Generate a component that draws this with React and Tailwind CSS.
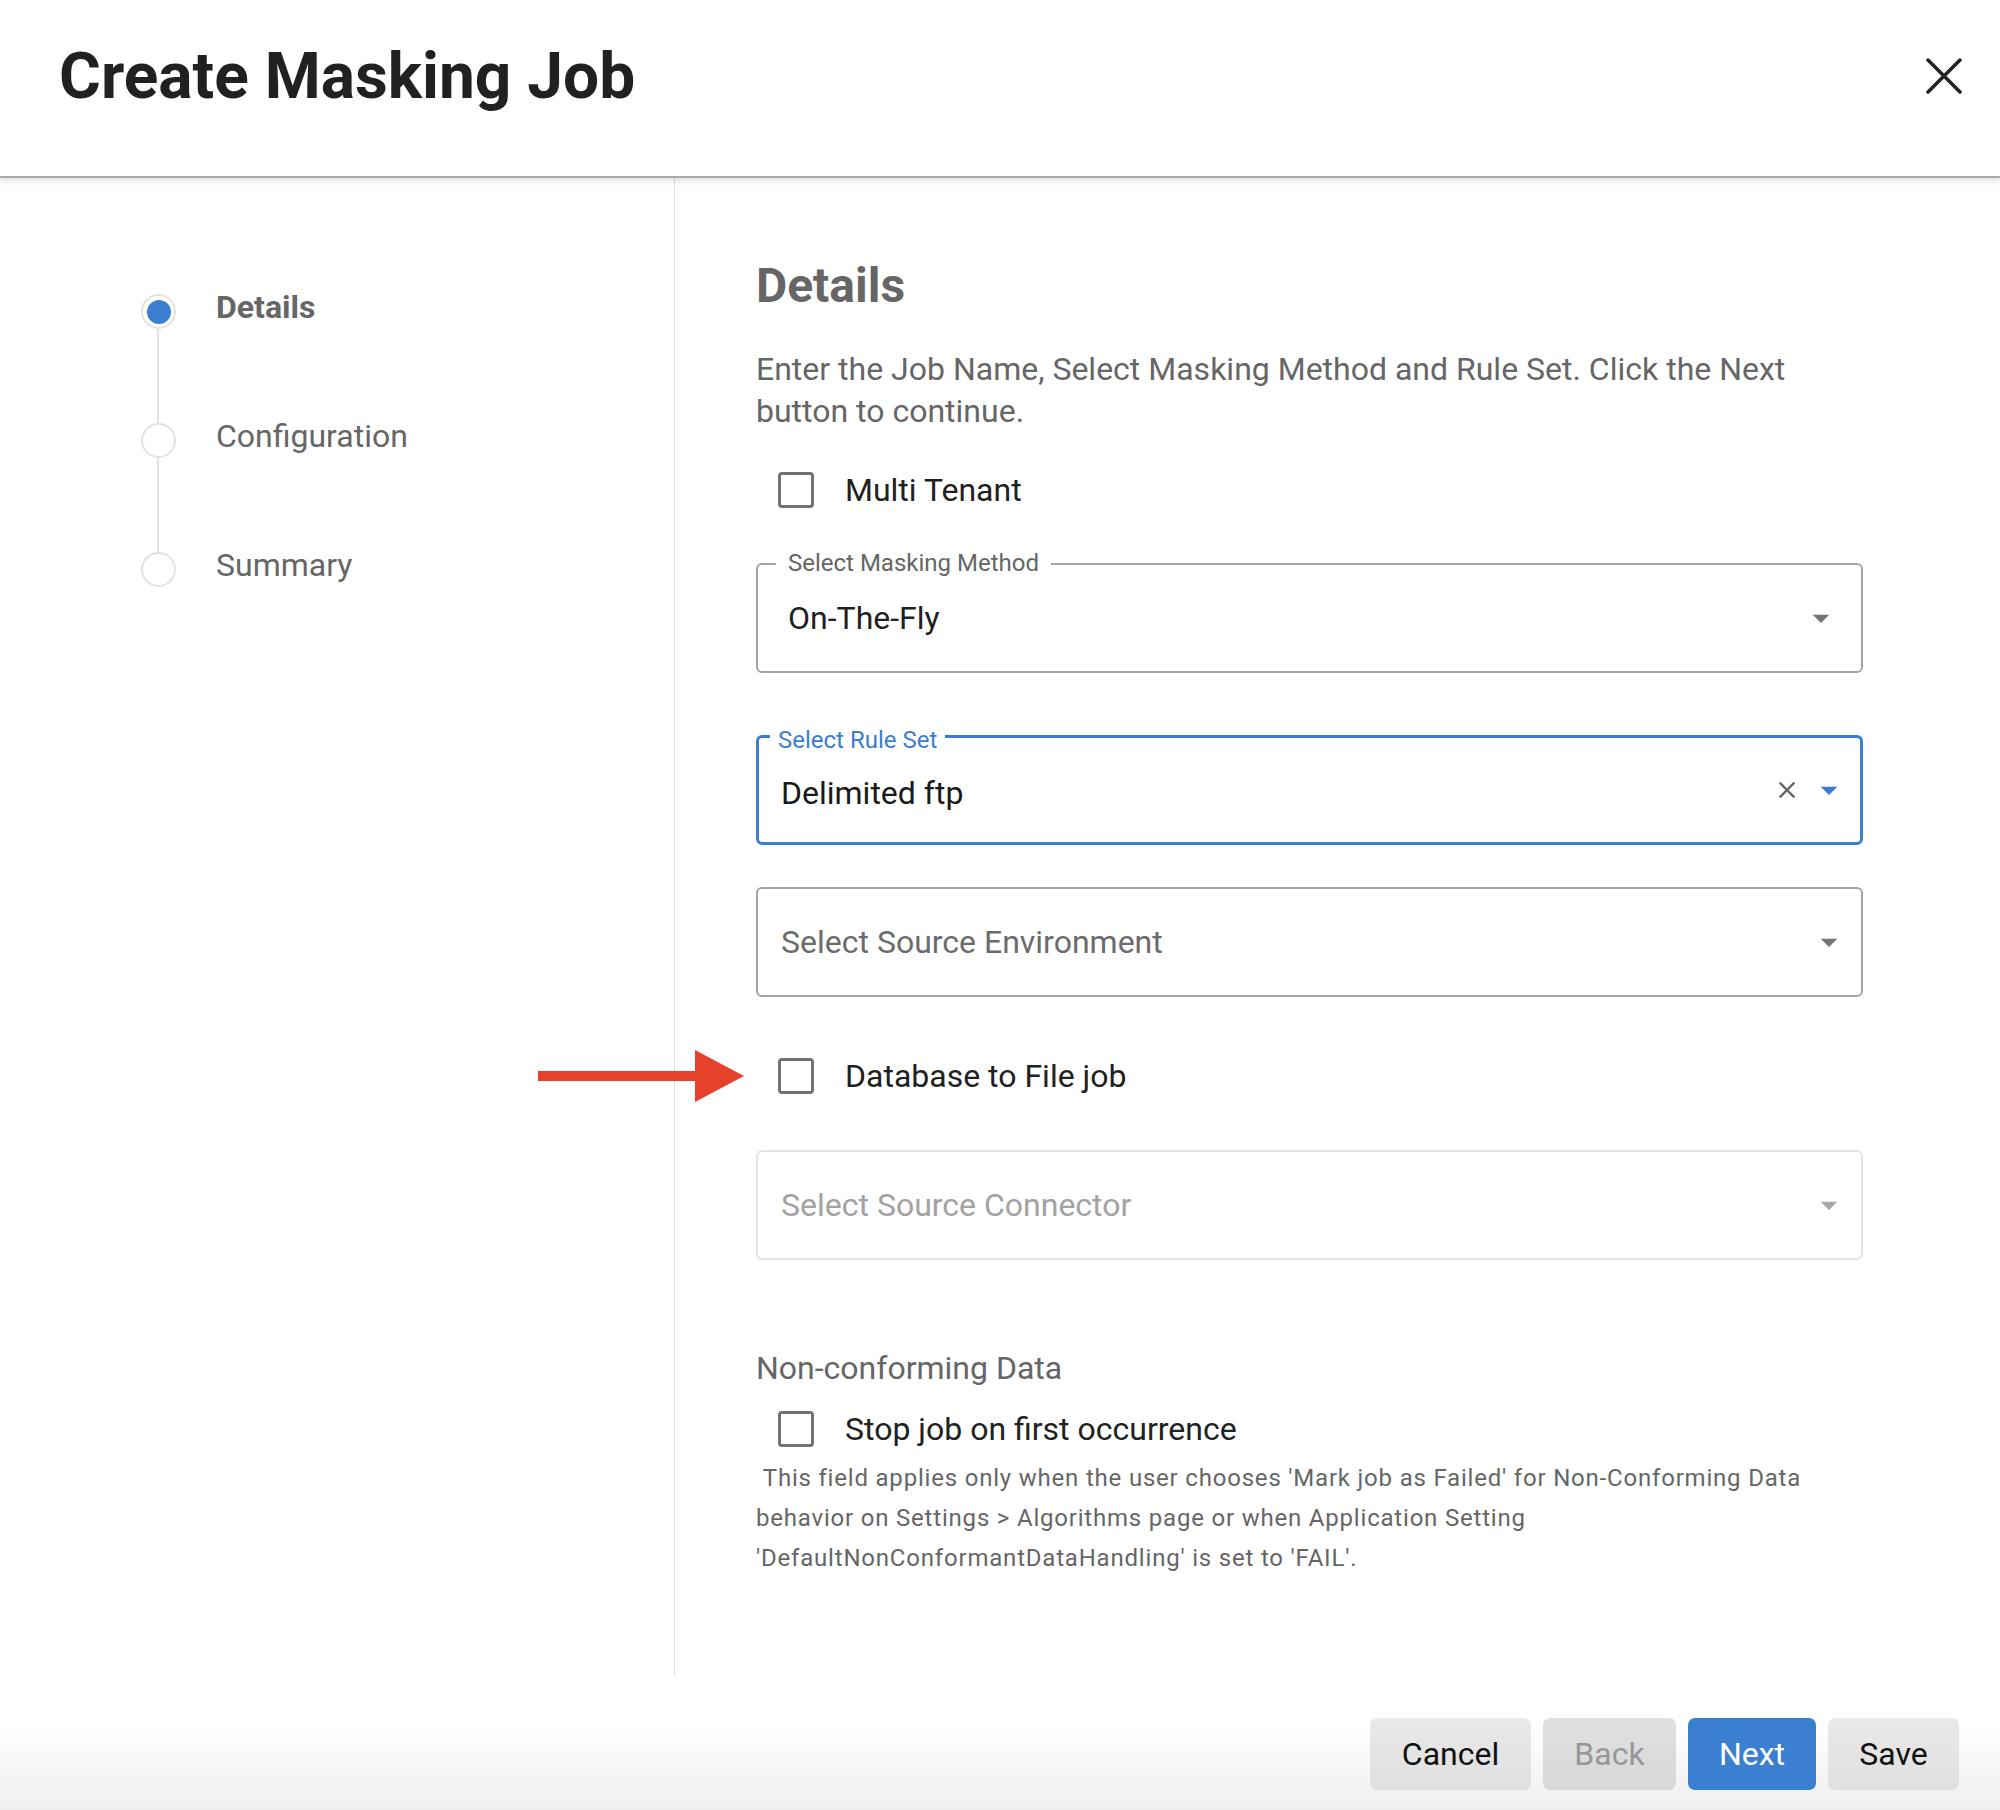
import React from 'react';

const ArrowDrop = ({ color }) => (
  <svg width="40" height="40" viewBox="0 0 24 24" className="shrink-0">
    <path d="M7 10l5 5 5-5z" fill={color} />
  </svg>
);

const Checkbox = () => (
  <div className="w-[36px] h-[36px] rounded-[4px] border-[3px] border-[#727272] bg-white shrink-0" />
);

const CheckRow = ({ label }) => (
  <div className="flex items-center h-[36px] pl-[22px]">
    <Checkbox />
    <span className="ml-[31px] text-[32px] leading-[36px] text-[#212121]">{label}</span>
  </div>
);

const Step = ({ label, active }) => (
  <div className="flex items-center h-[35px]">
    <div className="w-[35px] h-[35px] rounded-full border-2 border-[#e2e2e2] bg-white flex items-center justify-center shrink-0">
      {active && <div className="w-[24px] h-[24px] rounded-full bg-[#3b7ed0]" />}
    </div>
    <span className={`ml-[40px] mb-[9px] text-[32px] leading-[36px] text-[#666] ${active ? 'font-bold' : ''}`}>
      {label}
    </span>
  </div>
);

const Connector = () => <div className="ml-[16px] w-[2px] h-[94px] bg-[#e2e2e2]" />;

export default function App() {
  return (
    <div className="relative w-[2000px] h-[1810px] bg-white overflow-hidden font-['Roboto',sans-serif]">
      {/* header */}
      <div className="h-[178px] border-b-2 border-[#a9a9a9] shadow-[0_3px_6px_rgba(0,0,0,0.12)] flex items-start justify-between pl-[59px] pr-[38px] pt-[45px] relative z-10 bg-white">
        <h1 className="text-[64px] leading-[64px] font-bold text-[#212121]">Create Masking Job</h1>
        <svg width="36" height="36" viewBox="0 0 36 36" className="mt-[13px]">
          <path d="M2 2L34 34M34 2L2 34" stroke="#212121" strokeWidth="3.5" strokeLinecap="round" />
        </svg>
      </div>

      {/* body */}
      <div className="flex h-[1497px]">
        <div className="w-[675px] border-r border-[#dcdcdc] pt-[116px] pl-[141px] shrink-0">
          <Step label="Details" active />
          <Connector />
          <Step label="Configuration" />
          <Connector />
          <Step label="Summary" />
        </div>

        <div className="pl-[81px] pt-[80px] w-[1188px]">
          <h2 className="text-[48px] leading-[56px] font-bold text-[#666]">Details</h2>
          <p className="mt-[34px] text-[32px] leading-[42px] text-[#666] w-[1107px]">
            Enter the Job Name, Select Masking Method and Rule Set. Click the Next button to continue.
          </p>

          <div className="mt-[40px]">
            <CheckRow label="Multi Tenant" />
          </div>

          {/* masking method */}
          <div className="mt-[55px] relative h-[110px] w-[1107px] rounded-[6px] border-2 border-[#a3a3a3] flex items-center justify-between pl-[30px] pr-[20px]">
            <span className="absolute left-[18px] -top-[16px] px-[12px] bg-white text-[24px] leading-[28px] text-[#666]">
              Select Masking Method
            </span>
            <span className="text-[32px] leading-[40px] text-[#212121]">On-The-Fly</span>
            <ArrowDrop color="#757575" />
          </div>

          {/* rule set */}
          <div className="mt-[62px] relative h-[110px] w-[1107px] rounded-[6px] border-[3px] border-[#3b7ed0] flex items-center justify-between pl-[22px] pr-[11px]">
            <span className="absolute left-[11px] -top-[12px] px-[8px] bg-white text-[24px] leading-[28px] text-[#3b7ed0]">
              Select Rule Set
            </span>
            <span className="mt-[5px] text-[32px] leading-[40px] text-[#1a1a1a]">Delimited ftp</span>
            <div className="flex items-center gap-[8px]">
              <svg width="28" height="28" viewBox="0 0 24 24">
                <path d="M19 6.41L17.59 5 12 10.59 6.41 5 5 6.41 10.59 12 5 17.59 6.41 19 12 13.41 17.59 19 19 17.59 13.41 12z" fill="#666" />
              </svg>
              <ArrowDrop color="#3b7ed0" />
            </div>
          </div>

          {/* source environment */}
          <div className="mt-[42px] h-[110px] w-[1107px] rounded-[6px] border-2 border-[#a3a3a3] flex items-center justify-between pl-[23px] pr-[12px]">
            <span className="text-[32px] leading-[40px] text-[#6b6b6b]">Select Source Environment</span>
            <ArrowDrop color="#757575" />
          </div>

          <div className="mt-[61px]">
            <CheckRow label="Database to File job" />
          </div>

          {/* source connector (disabled) */}
          <div className="mt-[56px] h-[110px] w-[1107px] rounded-[6px] border-2 border-[#e4e4e4] flex items-center justify-between pl-[23px] pr-[12px]">
            <span className="text-[32px] leading-[40px] text-[#a2a2a2]">Select Source Connector</span>
            <ArrowDrop color="#a8a8a8" />
          </div>

          <div className="mt-[88px] text-[32px] leading-[40px] text-[#666]">Non-conforming Data</div>
          <div className="mt-[23px]">
            <CheckRow label="Stop job on first occurrence" />
          </div>
          <p className="mt-[11px] w-[1107px] text-[24px] leading-[40px] tracking-[0.8px] text-[#666]">
            {'\u00a0'}This field applies only when the user chooses 'Mark job as Failed' for Non-Conforming Data behavior on Settings &gt; Algorithms page or when Application Setting 'DefaultNonConformantDataHandling' is set to 'FAIL'.
          </p>
        </div>
      </div>

      {/* footer */}
      <div className="h-[135px] flex justify-end items-start pt-[43px] pr-[41px] gap-[12px] bg-linear-to-b from-white from-35% to-[#efefef]">
        <button className="w-[161px] h-[72px] rounded-[7px] bg-linear-to-b from-[#e9e9e9] to-[#e0e0e0] text-[32px] text-[#111]">Cancel</button>
        <button className="w-[133px] h-[72px] rounded-[7px] bg-linear-to-b from-[#e0e0e0] to-[#d8d8d8] text-[32px] text-[#979797]">Back</button>
        <button className="w-[128px] h-[72px] rounded-[7px] bg-[#3b7fd0] text-[32px] text-white">Next</button>
        <button className="w-[131px] h-[72px] rounded-[7px] bg-linear-to-b from-[#e9e9e9] to-[#e0e0e0] text-[32px] text-[#111]">Save</button>
      </div>

      {/* red annotation arrow */}
      <svg width="206" height="52" viewBox="0 0 206 52" className="absolute left-[538px] top-[1050px]">
        <rect x="0" y="21" width="162" height="10" fill="#e6422b" />
        <polygon points="157,0 206,26 157,52" fill="#e6422b" />
      </svg>
    </div>
  );
}
